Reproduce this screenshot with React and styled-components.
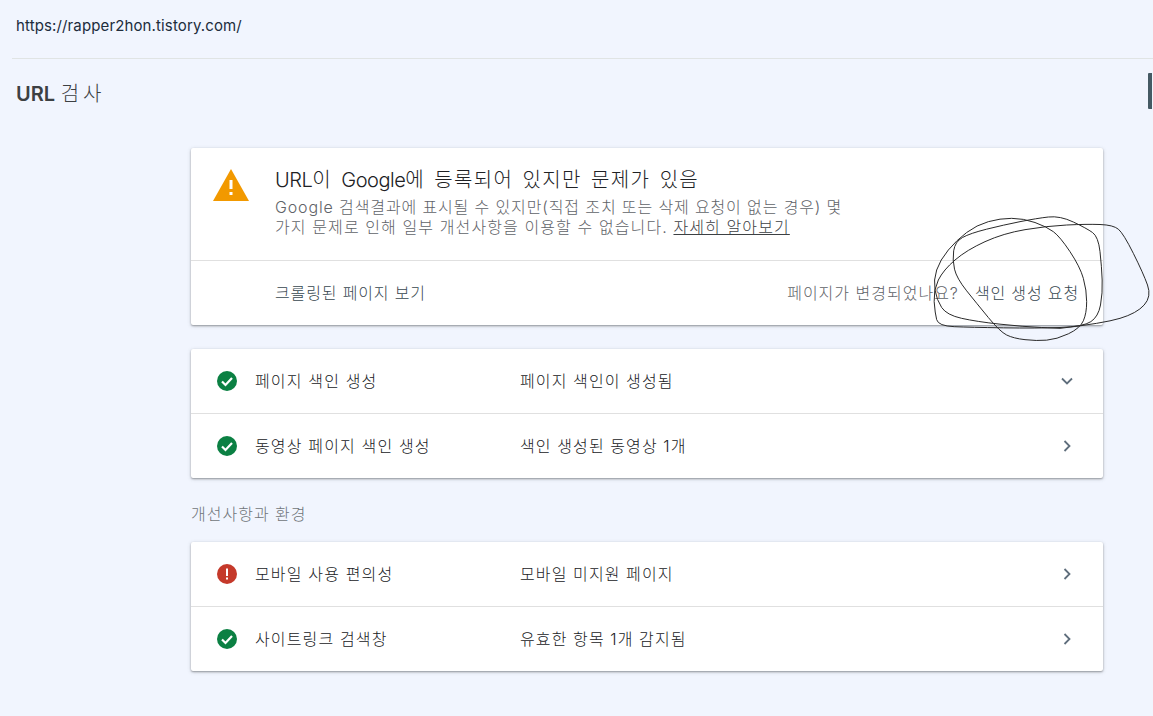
import React from 'react'
import styled, { createGlobalStyle } from 'styled-components'

const Global = createGlobalStyle`
    html, body {
        margin: 0;
        padding: 0;
        background: #f1f5fe;
    }
    body {
        font-family: "Inter", "Noto Sans CJK KR", sans-serif;
        overflow: hidden;
    }
`

const Page = styled.div`
    position: relative;
    width: 1153px;
    height: 716px;
    overflow: hidden;
    background: #f1f5fe;
`

const UrlBar = styled.div`
    height: 59px;
    margin-left: 12px;
    padding: 16px 0 0 4px;
    box-sizing: border-box;
    border-bottom: 1px solid #e0e4e4;
    font-size: 15px;
    line-height: 20px;
    letter-spacing: 0.13px;
    color: #202c3c;
`

const Title = styled.h1`
    margin: 0;
    padding: 22px 0 0 16px;
    height: 89px;
    box-sizing: border-box;
    font-size: 20px;
    line-height: 26px;
    font-weight: 300;
    color: #3c4043;

    b {
        font-weight: 600;
    }

    span {
        letter-spacing: 4px;
    }
`

const SideTab = styled.div`
    position: absolute;
    top: 73px;
    right: 1px;
    width: 4px;
    height: 36px;
    background: #455a64;
    border-radius: 1px 0 0 1px;
`

const Main = styled.main`
    width: 912px;
    margin-left: 191px;
    display: flex;
    flex-direction: column;
`

const Card = styled.section`
    background: #fff;
    border-radius: 2px;
    box-shadow: 0 1px 2px rgba(60, 64, 67, 0.45), 0 1px 4px rgba(60, 64, 67, 0.18);
    margin-bottom: ${p => p.$gap || 0}px;
`

const Verdict = styled.div`
    height: 113px;
    box-sizing: border-box;
    display: flex;
    padding: 18px 0 0 22px;
    border-bottom: 1px solid #e0e0e0;
`

const WarnIcon = styled.svg`
    width: 36px;
    height: 32px;
    margin-top: 3px;
    flex: none;
`

const VerdictText = styled.div`
    margin-left: 26px;
    width: 580px;
`

const VerdictTitle = styled.div`
    font-size: 20px;
    line-height: 28px;
    font-weight: 300;
    color: #202124;
    letter-spacing: 1.3px;
    word-spacing: 2.5px;
`

const Latin = styled.span`
    letter-spacing: -0.5px;
`

const VerdictSub = styled.div`
    font-size: 16px;
    line-height: 20px;
    font-weight: 300;
    color: #5f6368;
    margin-top: 3px;
`

const SubLine = styled.div`
    letter-spacing: ${p => p.$spacing}px;
    white-space: nowrap;
`

const LearnMore = styled.a`
    color: #3c4043;
    text-decoration: underline;
`

const Actions = styled.div`
    height: 64px;
    box-sizing: border-box;
    display: flex;
    align-items: center;
    justify-content: space-between;
    padding: 0 24px 3px 84px;
    font-size: 16px;
    font-weight: 300;
`

const ActionLink = styled.span`
    color: #37474f;
    letter-spacing: 0.85px;
`

const ActionNote = styled.span`
    color: #5f6368;
    letter-spacing: 1px;
    margin-right: 16px;
`

const Row = styled.div`
    height: 64px;
    box-sizing: border-box;
    display: flex;
    align-items: center;
    padding: 0 25px 0 25px;
    font-size: 16px;
    font-weight: 300;
    color: #202124;

    & + & {
        height: 65px;
        border-top: 1px solid #e0e0e0;
    }
`

const StatusIcon = styled.svg`
    width: 22px;
    height: 22px;
    flex: none;
`

const RowLabel = styled.span`
    width: 265px;
    margin-left: 17px;
    padding-bottom: 2px;
    flex: none;
    letter-spacing: 1.15px;
`

const RowValue = styled.span`
    flex: 1;
    padding-bottom: 2px;
    letter-spacing: 1.1px;
`

const Chevron = styled.svg`
    width: 22px;
    height: 22px;
    flex: none;
`

const SectionLabel = styled.div`
    font-size: 16px;
    line-height: 20px;
    font-weight: 300;
    letter-spacing: 1px;
    color: #70757a;
    margin: 1px 0 18px;
`

const Scribble = styled.svg`
    position: absolute;
    left: 770px;
    top: 200px;
    width: 383px;
    height: 150px;
    pointer-events: none;
`

// traced from the hand drawn loop, in 3x coordinates
const loop = [
    [870, 385], [1000, 370], [1100, 340], [1145, 290], [1120, 220], [1060, 100], [1030, 75], [950, 72],
    [830, 78], [700, 100], [590, 150], [520, 210], [490, 270], [495, 340], [505, 378], [600, 382],
    [800, 385], [940, 380], [985, 350], [998, 280], [995, 200], [985, 110], [950, 85], [870, 47],
    [800, 55], [700, 75], [600, 100], [555, 125], [547, 180], [560, 235], [620, 310], [690, 395],
    [730, 415], [800, 423], [860, 418], [930, 385], [950, 340], [950, 270], [930, 200], [870, 110],
    [830, 80], [760, 55], [690, 55], [620, 75], [560, 120], [510, 180], [490, 240], [500, 300],
    [530, 345], [620, 365], [760, 380], [870, 385],
]

const smooth = pts => {
    let d = `M${pts[0][0]} ${pts[0][1]}`
    for (let i = 1; i < pts.length - 1; i++) {
        const mx = (pts[i][0] + pts[i + 1][0]) / 2
        const my = (pts[i][1] + pts[i + 1][1]) / 2
        d += ` Q${pts[i][0]} ${pts[i][1]} ${mx} ${my}`
    }
    const last = pts[pts.length - 1]
    return d + ` L${last[0]} ${last[1]}`
}

const Status = ({ error }) => (
    <StatusIcon viewBox="0 0 22 22">
        <circle cx="11" cy="11" r="10" fill={error ? '#c5392a' : '#0b8043'} />
        {error ? (
            <>
                <rect x="10" y="5.5" width="2" height="7.5" fill="#fff" />
                <rect x="10" y="14.5" width="2" height="2" fill="#fff" />
            </>
        ) : (
            <path d="M6 11.5l3.5 3.5 6.5-7" fill="none" stroke="#fff" strokeWidth="2.2" />
        )}
    </StatusIcon>
)

const Arrow = ({ down }) => (
    <Chevron viewBox="0 0 22 22">
        <path
            d={down ? 'M6 8.5l5 5 5-5' : 'M8.5 6l5 5-5 5'}
            fill="none"
            stroke="#5f6e7c"
            strokeWidth="1.8"
        />
    </Chevron>
)

const ResultRow = ({ label, value, error, down }) => (
    <Row>
        <Status error={error} />
        <RowLabel>{label}</RowLabel>
        <RowValue>{value}</RowValue>
        <Arrow down={down} />
    </Row>
)

function App() {
    return (
        <Page>
            <Global />
            <UrlBar>https://rapper2hon.tistory.com/</UrlBar>
            <Title><b>URL</b> <span>검사</span></Title>
            <SideTab />
            <Main>
                <Card $gap={24}>
                    <Verdict>
                        <WarnIcon viewBox="0 0 36 32">
                            <path d="M18 0L36 32H0z" fill="#f29900" />
                            <rect x="16.5" y="11" width="3" height="9" fill="#fff" />
                            <rect x="16.5" y="23" width="3" height="3" fill="#fff" />
                        </WarnIcon>
                        <VerdictText>
                            <VerdictTitle>
                                <Latin>URL</Latin>이 <Latin>Google</Latin>에 등록되어 있지만 문제가 있음
                            </VerdictTitle>
                            <VerdictSub>
                                <SubLine $spacing={0.87}>Google 검색결과에 표시될 수 있지만(직접 조치 또는 삭제 요청이 없는 경우) 몇</SubLine>
                                <SubLine $spacing={1.1}>가지 문제로 인해 일부 개선사항을 이용할 수 없습니다. <LearnMore>자세히 알아보기</LearnMore></SubLine>
                            </VerdictSub>
                        </VerdictText>
                    </Verdict>
                    <Actions>
                        <ActionLink>크롤링된 페이지 보기</ActionLink>
                        <div>
                            <ActionNote>페이지가 변경되었나요?</ActionNote>
                            <ActionLink>색인 생성 요청</ActionLink>
                        </div>
                    </Actions>
                </Card>
                <Card $gap={25}>
                    <ResultRow label="페이지 색인 생성" value="페이지 색인이 생성됨" down />
                    <ResultRow label="동영상 페이지 색인 생성" value="색인 생성된 동영상 1개" />
                </Card>
                <SectionLabel>개선사항과 환경</SectionLabel>
                <Card>
                    <ResultRow label="모바일 사용 편의성" value="모바일 미지원 페이지" error />
                    <ResultRow label="사이트링크 검색창" value="유효한 항목 1개 감지됨" />
                </Card>
            </Main>
            <Scribble viewBox="0 0 1149 450">
                <path d={smooth(loop)} fill="none" stroke="#2a2a2a" strokeWidth="3" />
            </Scribble>
        </Page>
    )
}

export default App
